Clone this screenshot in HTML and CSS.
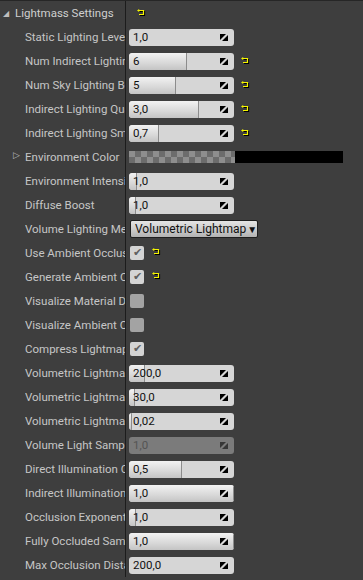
FILE: index.html
```html
<!DOCTYPE html>
<html lang="en">
<head>
  <meta charset="UTF-8">
  <title>Lightmass Settings</title>
  <link rel="stylesheet" href="styles.css">
</head>
<body>
  <svg width="0" height="0" class="defs">
    <defs>
      <symbol id="spin" viewBox="0 0 8 7">
        <path d="M0 0 H6 L0 6 Z" fill="#000"/>
        <path d="M8 7 V1 L2 7 Z" fill="#000"/>
      </symbol>
      <symbol id="reset" viewBox="0 0 9 8">
        <path d="M2.5 2.5 H7.5 V6.5 H3" fill="none" stroke="#000" stroke-width="1.2"/>
        <path d="M1.5 1.5 H6.5 V5.5 H2" fill="none" stroke="#f5f500" stroke-width="1.2"/>
        <path d="M0 1.5 L2.2 0 V3 Z" fill="#f5f500"/>
      </symbol>
    </defs>
  </svg>

  <div class="panel">
    <div class="row header">
      <div class="name"><span class="caret">&#9698;</span><span class="label">Lightmass Settings</span></div>
      <div class="value"><svg class="reset head-reset"><use href="#reset"/></svg></div>
    </div>

    <div class="row">
      <div class="name"><span class="label">Static Lighting Level Scale</span></div>
      <div class="value"><div class="field"><span class="num">1,0</span><svg class="spin"><use href="#spin"/></svg></div></div>
    </div>
    <div class="row">
      <div class="name"><span class="label">Num Indirect Lighting Bounces</span></div>
      <div class="value"><div class="field"><div class="fill" style="width:58px"></div><span class="num">6</span><svg class="spin"><use href="#spin"/></svg></div><svg class="reset"><use href="#reset"/></svg></div>
    </div>
    <div class="row">
      <div class="name"><span class="label">Num Sky Lighting Bounces</span></div>
      <div class="value"><div class="field"><div class="fill" style="width:47px"></div><span class="num">5</span><svg class="spin"><use href="#spin"/></svg></div><svg class="reset"><use href="#reset"/></svg></div>
    </div>
    <div class="row">
      <div class="name"><span class="label">Indirect Lighting Quality</span></div>
      <div class="value"><div class="field"><div class="fill" style="width:70px"></div><span class="num">3,0</span><svg class="spin"><use href="#spin"/></svg></div><svg class="reset"><use href="#reset"/></svg></div>
    </div>
    <div class="row">
      <div class="name"><span class="label">Indirect Lighting Smoothness</span></div>
      <div class="value"><div class="field"><div class="fill" style="width:30px"></div><span class="num">0,7</span><svg class="spin"><use href="#spin"/></svg></div><svg class="reset"><use href="#reset"/></svg></div>
    </div>
    <div class="row">
      <div class="name"><span class="expander">&#9655;</span><span class="label">Environment Color</span></div>
      <div class="value"><div class="color"><div class="checker"></div><div class="swatch"></div></div></div>
    </div>
    <div class="row">
      <div class="name"><span class="label">Environment Intensity</span></div>
      <div class="value"><div class="field"><div class="fill" style="width:8px"></div><span class="num">1,0</span><svg class="spin"><use href="#spin"/></svg></div></div>
    </div>
    <div class="row">
      <div class="name"><span class="label">Diffuse Boost</span></div>
      <div class="value"><div class="field"><div class="fill" style="width:7px"></div><span class="num">1,0</span><svg class="spin"><use href="#spin"/></svg></div></div>
    </div>
    <div class="row">
      <div class="name"><span class="label">Volume Lighting Method</span></div>
      <div class="value"><div class="combo"><span class="combo-text">Volumetric Lightmap</span><span class="arrow">&#9660;</span></div></div>
    </div>
    <div class="row">
      <div class="name"><span class="label">Use Ambient Occlusion</span></div>
      <div class="value"><div class="check on">&#10004;</div><svg class="reset check-reset"><use href="#reset"/></svg></div>
    </div>
    <div class="row">
      <div class="name"><span class="label">Generate Ambient Occlusion Material Mask</span></div>
      <div class="value"><div class="check on">&#10004;</div><svg class="reset check-reset"><use href="#reset"/></svg></div>
    </div>
    <div class="row">
      <div class="name"><span class="label">Visualize Material Diffuse</span></div>
      <div class="value"><div class="check"></div></div>
    </div>
    <div class="row">
      <div class="name"><span class="label">Visualize Ambient Occlusion</span></div>
      <div class="value"><div class="check"></div></div>
    </div>
    <div class="row">
      <div class="name"><span class="label">Compress Lightmaps</span></div>
      <div class="value"><div class="check on">&#10004;</div></div>
    </div>
    <div class="row">
      <div class="name"><span class="label">Volumetric Lightmap Detail Cell Size</span></div>
      <div class="value"><div class="field"><div class="fill" style="width:16px"></div><span class="num">200,0</span><svg class="spin"><use href="#spin"/></svg></div></div>
    </div>
    <div class="row">
      <div class="name"><span class="label">Volumetric Lightmap Maximum Brick Memory Mb</span></div>
      <div class="value"><div class="field"><div class="fill" style="width:6px"></div><span class="num">30,0</span><svg class="spin"><use href="#spin"/></svg></div></div>
    </div>
    <div class="row">
      <div class="name"><span class="label">Volumetric Lightmap Spherical Harmonic Smoothing</span></div>
      <div class="value"><div class="field"><div class="fill" style="width:3px"></div><span class="num">0,02</span><svg class="spin"><use href="#spin"/></svg></div></div>
    </div>
    <div class="row">
      <div class="name"><span class="label">Volume Light Sample Placement Scale</span></div>
      <div class="value"><div class="field disabled"><span class="num">1,0</span><svg class="spin"><use href="#spin"/></svg></div></div>
    </div>
    <div class="row">
      <div class="name"><span class="label">Direct Illumination Occlusion Fraction</span></div>
      <div class="value"><div class="field"><div class="fill" style="width:53px"></div><span class="num">0,5</span><svg class="spin"><use href="#spin"/></svg></div></div>
    </div>
    <div class="row">
      <div class="name"><span class="label">Indirect Illumination Occlusion Fraction</span></div>
      <div class="value"><div class="field"><div class="fill" style="width:105px"></div><span class="num">1,0</span><svg class="spin"><use href="#spin"/></svg></div></div>
    </div>
    <div class="row">
      <div class="name"><span class="label">Occlusion Exponent</span></div>
      <div class="value"><div class="field"><div class="fill" style="width:7px"></div><span class="num">1,0</span><svg class="spin"><use href="#spin"/></svg></div></div>
    </div>
    <div class="row">
      <div class="name"><span class="label">Fully Occluded Samples Fraction</span></div>
      <div class="value"><div class="field"><div class="fill" style="width:105px"></div><span class="num">1,0</span><svg class="spin"><use href="#spin"/></svg></div></div>
    </div>
    <div class="row">
      <div class="name"><span class="label">Max Occlusion Distance</span></div>
      <div class="value"><div class="field"><span class="num">200,0</span><svg class="spin"><use href="#spin"/></svg></div></div>
    </div>
  </div>
</body>
</html>
```

FILE: styles.css
```css
body {
  margin: 0;
  background: #3e3e3e;
  font-family: Roboto, "Noto Sans", sans-serif;
  font-size: 11.5px;
  color: #c6c6c6;
  overflow: hidden;
}
.defs {
  position: absolute;
}
.panel {
  border-top: 1px solid #262626;
}
.row {
  display: flex;
  height: 24px;
}
.name {
  width: 126px;
  flex: none;
  box-sizing: border-box;
  padding-left: 25px;
  display: flex;
  align-items: center;
  border-right: 1px solid #1c1c1c;
}
.label {
  flex: 1;
  min-width: 0;
  white-space: nowrap;
  overflow: hidden;
}
.header .name {
  padding-left: 3px;
  color: #cfcfcf;
}
.caret {
  font-size: 8px;
  color: #bdbdbd;
  width: 12px;
  margin-top: 1px;
}
.expander {
  font-size: 9px;
  color: #bdbdbd;
  margin-left: -12px;
  width: 12px;
  margin-top: -4px;
}
.value {
  flex: 1;
  display: flex;
  align-items: center;
  padding-left: 3px;
}
.field {
  position: relative;
  width: 105px;
  height: 17px;
  border-radius: 3px;
  background: #d6d6d6;
  display: flex;
  align-items: center;
  overflow: hidden;
  color: #111;
}
.fill {
  position: absolute;
  left: 0;
  top: 0;
  bottom: 0;
  border-radius: 3px 0 0 3px;
  background: linear-gradient(#f2f2f2, #dadada 55%, #c4c4c4);
  box-shadow: inset -1px 0 0 #8c8c8c;
}
.num {
  position: relative;
  padding-left: 4px;
  flex: 1;
}
.spin {
  position: relative;
  width: 8px;
  height: 7px;
  margin-right: 6px;
}
.disabled {
  background: #7b7b7b;
  color: #545454;
}
.disabled .spin {
  opacity: 0.55;
}
.reset {
  width: 9px;
  height: 8px;
  margin-left: 7px;
}
.head-reset {
  margin-left: 8px;
  margin-top: -1px;
}
.check-reset {
  margin-left: 8px;
  margin-top: -2px;
}
.color {
  display: flex;
  height: 12px;
  margin-top: -1px;
}
.checker {
  width: 106px;
  background-color: #8e8e8e;
  background-image: conic-gradient(#6c6c6c 25%, transparent 0 50%, #6c6c6c 0 75%, transparent 0);
  background-size: 12px 12px;
}
.swatch {
  width: 108px;
  background: #000;
}
.combo {
  width: 128px;
  height: 18px;
  box-sizing: border-box;
  padding: 0 3px 0 4px;
  border: 1px solid #1e1e1e;
  border-radius: 2px;
  background: linear-gradient(#e4e4e4, #c8c8c8 60%, #b2b2b2);
  color: #111;
  display: flex;
  align-items: center;
  white-space: nowrap;
  margin-left: 1px;
}
.combo-text {
  font-size: 12px;
}
.arrow {
  font-size: 10px;
  margin-left: 1px;
}
.check {
  width: 14px;
  height: 14px;
  margin-left: 1px;
  border-radius: 2px;
  background: #a3a3a3;
  color: #606060;
  font-size: 11px;
  line-height: 14px;
  text-align: center;
}
.check.on {
  background: #d4d4d4;
}
```
